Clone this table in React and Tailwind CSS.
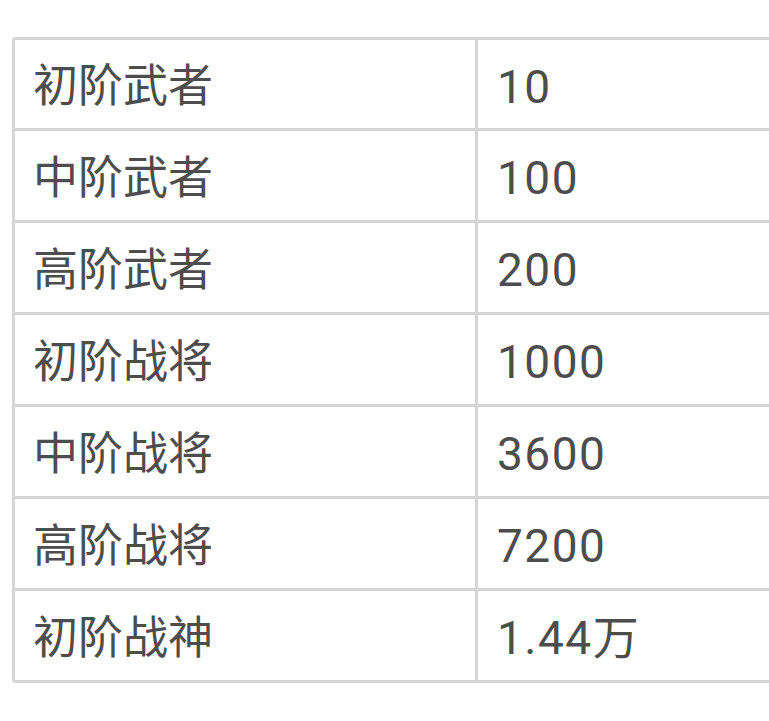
export default function App() {
  const rows = [
    ["初阶武者", "10"],
    ["中阶武者", "100"],
    ["高阶武者", "200"],
    ["初阶战将", "1000"],
    ["中阶战将", "3600"],
    ["高阶战将", "7200"],
    ["初阶战神", "1.44万"],
  ];
  return (
    <div className="w-[769px] h-[721px] overflow-hidden bg-white pt-[37px] pl-[12px]" style={{ fontFamily: 'Roboto, "Noto Sans CJK SC", sans-serif' }}>
      <div className="w-[940px] border-[3px] border-[#d5d5d5] rounded-[4px] text-[45px] text-[#4d4d4d]">
        {rows.map(([a, b], i) => (
          <div key={i} className={`grid grid-cols-[463px_1fr] ${i === 0 ? "h-[88px]" : "h-[92px] border-t-[3px] border-[#d5d5d5]"}`}>
            <div className="flex items-center pl-[18px] pt-[5px] border-r-[3px] border-[#d5d5d5] leading-none">{a}</div>
            <div className="flex items-center pl-[19px] pt-[5px] leading-none text-[46px] tracking-[1.5px]">{b}</div>
          </div>
        ))}
      </div>
    </div>
  );
}
